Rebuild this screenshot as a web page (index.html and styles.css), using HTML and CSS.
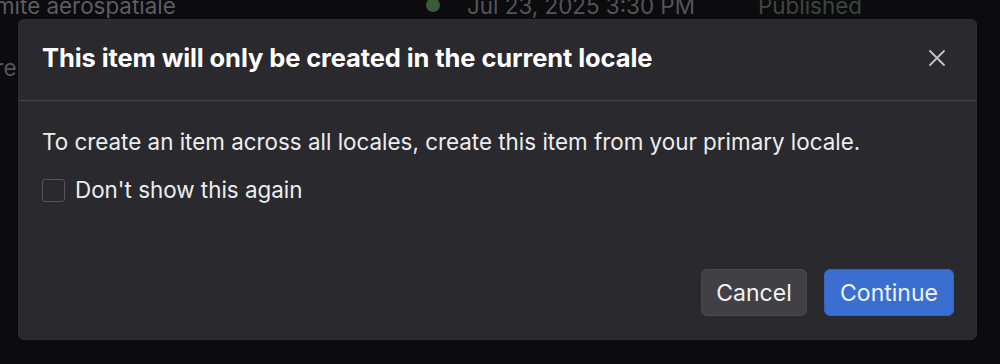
FILE: index.html
```html
<!DOCTYPE html>
<html lang="en">
<head>
<meta charset="utf-8">
<title>Dialog</title>
<link rel="stylesheet" href="styles.css">
</head>
<body>
<div class="bg">
  <div class="row row1">
    <span class="cell name">mite aerospatiale</span>
    <span class="dot"></span>
    <span class="cell date">Jul 23, 2025 3:30 PM</span>
    <span class="cell status">Published</span>
  </div>
  <div class="row row2">
    <span class="cell name2">tre</span>
  </div>
</div>

<div class="overlay">
  <div class="dialog" role="dialog">
    <div class="header">
      <h2 class="title">This item will only be created in the current locale</h2>
      <button class="close" aria-label="Close">
        <svg width="18" height="18" viewBox="0 0 18 18"><path d="M2 2 L16 16 M16 2 L2 16" stroke="#c4c4c8" stroke-width="1.8" stroke-linecap="round" fill="none"/></svg>
      </button>
    </div>
    <div class="body">
      <p class="msg">To create an item across all locales, create this item from your primary locale.</p>
      <label class="check"><span class="box"></span><span>Don't show this again</span></label>
    </div>
    <div class="footer">
      <button class="btn cancel">Cancel</button>
      <button class="btn primary">Continue</button>
    </div>
  </div>
</div>
</body>
</html>
```
FILE: styles.css
```css
* { box-sizing: border-box; }
html, body { margin: 0; padding: 0; }
body {
  width: 1000px;
  height: 364px;
  overflow: hidden;
  background: #0c0b0e;
  font-family: Inter, "Noto Sans", "Liberation Sans", sans-serif;
  position: relative;
}
.bg { margin-top: -9px; }
.row {
  display: flex;
  align-items: center;
  height: 28px;
  font-size: 22.4px;
}
.cell { white-space: nowrap; }
.name { width: 431px; flex: none; color: #5d5c62; margin-left: -5px; }
.dot {
  width: 14px; height: 14px; border-radius: 50%;
  flex: none;
  background: #3a5a3c;
  margin-right: 27px;
}
.date { width: 291px; flex: none; color: #55545a; }
.status { color: #3b473d; }
.row2 { margin-top: 34px; }
.name2 { color: #56555b; margin-left: -12px; }

.overlay {
  position: absolute;
  left: 18px;
  top: 19px;
}
.dialog {
  width: 959px;
  height: 321px;
  background: #2a292d;
  border-radius: 6px;
  border: 1px solid #2f2e33;
  display: flex;
  flex-direction: column;
  color: #f2f2f4;
}
.header {
  height: 81px;
  border-bottom: 1px solid #434247;
  display: flex;
  align-items: center;
  justify-content: space-between;
  padding: 0 30px 5px 23px;
}
.title {
  margin: 0;
  font-size: 25.5px;
  font-weight: 700;
  color: #ffffff;
  letter-spacing: -0.1px;
}
.close {
  background: none;
  border: 0;
  padding: 0;
  width: 18px;
  height: 18px;
  display: flex;
}
.body {
  padding: 28px 23px 0;
  flex: 1;
}
.msg {
  margin: 0;
  font-size: 22.4px;
  line-height: 26px;
  color: #ededf0;
}
.check {
  margin-top: 22px;
  display: flex;
  align-items: center;
  gap: 10px;
  font-size: 22.4px;
  line-height: 26px;
  color: #ededf0;
}
.box {
  width: 23px; height: 23px;
  border: 1.5px solid #56555b;
  border-radius: 3px;
}
.footer {
  display: flex;
  justify-content: flex-end;
  gap: 17px;
  padding: 0 22px 23px;
}
.btn {
  height: 47px;
  font-family: inherit;
  font-size: 23px;
  border-radius: 6px;
  color: #f2f2f4;
  padding: 0;
}
.cancel {
  width: 106px;
  background: #414044;
  border: 1px solid #4a494e;
}
.primary {
  width: 130px;
  background: #3a6ed0;
  border: 1px solid #3364c0;
  color: #eef3ff;
}
```
